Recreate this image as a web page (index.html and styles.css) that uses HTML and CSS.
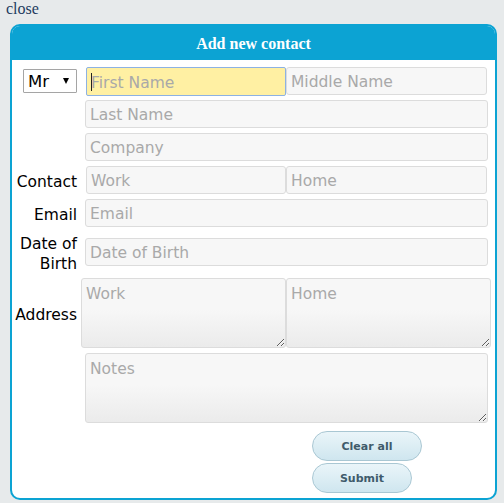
FILE: index.html
```html
<!DOCTYPE html>
<html>
<head>
<meta charset="utf-8">
<link rel="stylesheet" href="styles.css">
</head>
<body>
<a class="close">close</a>
<div class="panel">
  <div class="head">Add new contact</div>
  <form class="body">
    <div class="row">
      <div class="lab selcell"><span class="sel"><select><option>Mr</option></select></span></div>
      <div class="pair">
        <span class="focus"><input class="fld first" placeholder="First Name"></span>
        <input class="fld half2" placeholder="Middle Name">
      </div>
    </div>
    <div class="row">
      <div class="lab"></div>
      <input class="fld" placeholder="Last Name">
    </div>
    <div class="row">
      <div class="lab"></div>
      <input class="fld" placeholder="Company">
    </div>
    <div class="row">
      <div class="lab">Contact</div>
      <div class="pair">
        <input class="fld half1" placeholder="Work">
        <input class="fld half2" placeholder="Home">
      </div>
    </div>
    <div class="row">
      <div class="lab">Email</div>
      <input class="fld" placeholder="Email">
    </div>
    <div class="row tall">
      <div class="lab">Date of<br>Birth</div>
      <input class="fld" placeholder="Date of Birth">
    </div>
    <div class="row addrrow">
      <div class="lab">Address</div>
      <div class="pair addr">
        <textarea class="ta wa" placeholder="Work"></textarea>
        <textarea class="ta ha" placeholder="Home"></textarea>
      </div>
    </div>
    <div class="row notesrow">
      <div class="lab"></div>
      <textarea class="ta notes" placeholder="Notes"></textarea>
    </div>
    <div class="btns">
      <button type="button" class="btn clear">Clear all</button>
      <button type="button" class="btn submit">Submit</button>
    </div>
  </form>
</div>
</body>
</html>
```
FILE: styles.css
```css
html, body {
  margin: 0;
  padding: 0;
  background: #e7eaeb;
}
body {
  padding: 0 0 0 6px;
  width: 498px;
  box-sizing: border-box;
}
.close {
  display: block;
  font-family: "Liberation Serif", serif;
  font-size: 16px;
  line-height: 17px;
  color: #1d3a5e;
  height: 24px;
}
.panel {
  margin-left: 4px;
  width: 487px;
  height: 476px;
  box-sizing: border-box;
  border: 2px solid #0ca3d3;
  border-radius: 10px;
  background: #fff;
  overflow: hidden;
}
.head {
  background: #0ca3d3;
  height: 34px;
  margin-top: -2px;
  padding-top: 2px;
  color: #fff;
  font-family: "Liberation Serif", serif;
  font-weight: bold;
  font-size: 16px;
  line-height: 35px;
  text-align: center;
}
.body {
  margin: 0;
  padding: 7px 0 0 11px;
  font-family: "DejaVu Sans", sans-serif;
  font-size: 15.5px;
}
.row {
  display: grid;
  grid-template-columns: 54px 403px;
  column-gap: 8px;
  height: 28px;
  margin-bottom: 5px;
  align-items: start;
}
.row.tall { height: 40px; }
.row.addrrow { height: 71px; }
.row.notesrow { height: 70px; }
.lab {
  text-align: right;
  color: #000;
  font-size: 15.5px;
  line-height: 21px;
  white-space: nowrap;
  direction: rtl;
  padding-top: 6px;
}
.lab.selcell { padding-top: 2px; line-height: 0; }
.tall .lab { line-height: 20px; padding-top: 2px; }
.tall .fld { margin-top: 6px; }
.addrrow .lab { padding-top: 28px; }
.addrrow .pair { margin-top: 1px; }
.sel {
  position: relative;
  display: inline-block;
  width: 54px;
  height: 24px;
  direction: ltr;
}
.sel select {
  appearance: none;
  -webkit-appearance: none;
  width: 54px;
  height: 24px;
  box-sizing: border-box;
  border: 1px solid #a5a5a5;
  border-radius: 1px;
  background: #fff;
  font-family: "DejaVu Sans", sans-serif;
  font-size: 16.5px;
  padding: 0 0 0 4px;
  color: #000;
  display: block;
}
.sel::after {
  content: "";
  position: absolute;
  right: 8px;
  top: 9px;
  border-left: 3.5px solid transparent;
  border-right: 3.5px solid transparent;
  border-top: 6px solid #000;
  pointer-events: none;
}
.fld {
  box-sizing: border-box;
  height: 28px;
  width: 403px;
  margin: 0;
  border: 1px solid #dcdcdc;
  border-radius: 3px;
  background: #f7f7f7;
  font-family: "DejaVu Sans", sans-serif;
  font-size: 15.5px;
  padding: 2px 4px 0;
  color: #333;
  outline: none;
}
.fld::placeholder, .ta::placeholder { color: #a9a9a9; }
.pair {
  display: flex;
  width: 403px;
}
.focus {
  position: relative;
  display: block;
  margin-left: 1px;
}
.focus::after {
  content: "";
  position: absolute;
  left: 5px;
  top: 6px;
  width: 1px;
  height: 18px;
  background: #222;
}
.first {
  width: 200px;
  height: 29px;
  background: #fff0a3;
  border: 1px solid #8db2e3;
  border-radius: 2px;
}
.half1 { width: 200px; margin-left: 1px; }
.half2 { width: 201px; }
.ta {
  box-sizing: border-box;
  height: 70px;
  margin: 0;
  border: 1px solid #dcdcdc;
  border-radius: 3px;
  background: linear-gradient(#f7f7f7 0%, #f7f7f7 45%, #ebebeb 100%);
  font-family: "DejaVu Sans", sans-serif;
  font-size: 15.5px;
  padding: 6px 4px;
  color: #333;
  outline: none;
  resize: both;
  display: block;
}
.addr { margin-left: -4px; width: 410px; }
.wa { width: 205px; }
.ha { width: 205px; }
.notes { width: 403px; }
.btns {
  display: flex;
  flex-direction: column;
  align-items: flex-start;
  padding-left: 289px;
  padding-top: 3px;
  gap: 2px;
}
.btn {
  height: 30px;
  border: 1px solid #a9c7d3;
  border-radius: 15px;
  background: linear-gradient(#eaf5f9, #cfe6ef);
  color: #3f5b6b;
  font-family: "DejaVu Sans", sans-serif;
  font-weight: bold;
  font-size: 11px;
  padding: 0;
}
.clear { width: 110px; }
.submit { width: 100px; height: 30px; }
```
